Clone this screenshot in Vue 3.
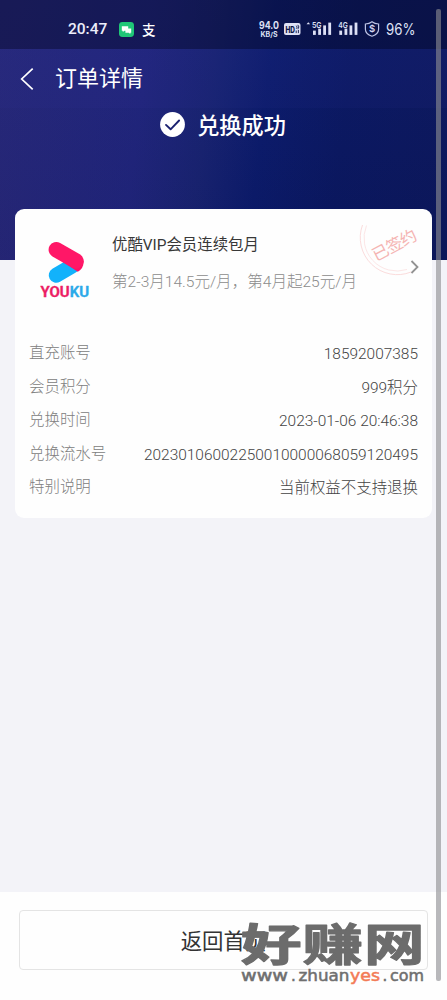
<template>
    <div class="page">
        <header class="hero">
            <div class="status">
                <div class="status-left">
                    <span class="clock">20:47</span>
                    <svg class="chat" width="15" height="15" viewBox="0 0 15 15">
                        <rect width="15" height="15" rx="3.4" fill="#1fc777" />
                        <path d="M2.8 4.2h6.4v4.6H5.4L3.8 10V8.8h-1z" fill="#fff" />
                        <path d="M6.4 6.5h5.8v4.2h-.9v1.2l-1.6-1.2H6.4z" fill="#f4fff9" />
                    </svg>
                    <span class="pay">支</span>
                </div>
                <svg class="status-right" width="162" height="22" viewBox="0 0 162 22">
                    <g fill="#dde0f5">
                        <text x="2" y="10.5" font-size="10" font-weight="700" textLength="20" lengthAdjust="spacingAndGlyphs">94.0</text>
                        <text x="3.5" y="18.6" font-size="7" font-weight="700" textLength="17" lengthAdjust="spacingAndGlyphs">KB/S</text>
                        <rect x="27" y="5" width="16.5" height="12" rx="2" />
                        <path d="M49.5 6.2l1.8-2 1.8 2z" />
                        <text x="55" y="9.6" font-size="8" font-weight="600" textLength="9.5" lengthAdjust="spacingAndGlyphs">5G</text>
                        <text x="81.2" y="9.6" font-size="8" font-weight="600" textLength="9.5" lengthAdjust="spacingAndGlyphs">4G</text>
                        <g v-for="x in [56, 82.3]" :key="x">
                            <rect :x="x" y="12.6" width="2.8" height="4.3" />
                            <rect :x="x + 5.2" y="10.6" width="2.8" height="6.3" />
                            <rect :x="x + 10.2" y="7.4" width="2.8" height="9.5" />
                            <rect :x="x + 15.3" y="4.6" width="2.8" height="12.3" />
                        </g>
                    </g>
                    <text x="28.5" y="14.5" font-size="9" font-weight="800" fill="#0b1345" textLength="9.5" lengthAdjust="spacingAndGlyphs">HD</text>
                    <path d="M39.3 7.7q1.7 1.4 0 3M40.8 6.9q2.2 2 0 4.2M39.2 12.5v2.6M41.4 11.900v3.200" fill="none" stroke="#0b1345" stroke-width=".9" />
                    <path d="M115 3.700c2 1.500 4 2.100 6.600 2.300v5.200c0 3.400-2.400 5.600-6.600 7-4.200-1.400-6.600-3.600-6.600-7V6c2.600-.2 4.600-.8 6.600-2.300z" fill="none" stroke="#bdc4e6" stroke-width="1.2" />
                    <text x="115" y="14.300" font-size="9.5" font-weight="600" text-anchor="middle" fill="#d5d9f2">$</text>
                    <text x="129" y="16.500" font-size="15.500" font-weight="400" fill="#dde0f5" textLength="29.500" lengthAdjust="spacingAndGlyphs">96%</text>
                </svg>
            </div>
            <nav class="nav">
                <svg width="14" height="24" viewBox="0 0 14 24">
                    <path d="M12.7 1.7L1.7 12l11 10.3" fill="none" stroke="#fff" stroke-width="1.7" />
                </svg>
                <h1>订单详情</h1>
            </nav>
            <div class="result">
                <svg width="25" height="25" viewBox="0 0 25 25">
                    <circle cx="12.5" cy="12.5" r="12.4" fill="#fff" />
                    <path d="M6 12.9l4.6 4.4 8.5-8.8" fill="none" stroke="#1b2170" stroke-width="1.9" stroke-linecap="round" stroke-linejoin="round" />
                </svg>
                <span>兑换成功</span>
            </div>
        </header>

        <main class="card">
            <section class="product">
                <svg class="logo" width="52" height="60" viewBox="0 0 52 60">
                    <path d="M17.2 36.3L33 27" stroke="#12b2fb" stroke-width="15" stroke-linecap="round" />
                    <path d="M18 19L38.8 32.7Q44.8 29.5 44.6 22L34 14z" fill="#ff0f65" />
                    <path d="M17.3 10.7L37 22" stroke="#ff1767" stroke-width="15.4" stroke-linecap="round" />
                    <text x="1.5" y="57.8" font-size="13.8" font-weight="600" stroke-width=".4" stroke-linejoin="round" textLength="48.5" lengthAdjust="spacingAndGlyphs"><tspan fill="#ec1b63" stroke="#ec1b63">YOU</tspan><tspan fill="#2ba9e9" stroke="#2ba9e9">KU</tspan></text>
                </svg>
                <div class="info">
                    <h2>优酷VIP会员连续包月</h2>
                    <p>第2-3月14.5元/月，第4月起25元/月</p>
                </div>
                <svg class="stamp" width="68" height="60" viewBox="0 0 68 60">
                    <path d="M10.5 4A37 37 0 0 0 59 51" fill="none" stroke="#fbdcdc" stroke-width="1" />
                    <path d="M14.5 4.5A33 33 0 0 0 55 48.5" fill="none" stroke="#fce6e6" stroke-width="1" />
                    <text transform="translate(24 40.5) rotate(-28)" font-size="16.5" textLength="48" fill="#f5b5b3">已签约</text>
                </svg>
                <svg class="arrow" width="10" height="14" viewBox="0 0 10 14">
                    <path d="M1.5 1l6 6-6 6" fill="none" stroke="#929292" stroke-width="1.8" />
                </svg>
            </section>
            <dl class="details">
                <div v-for="row in rows" :key="row.label" class="row">
                    <dt>{{ row.label }}</dt>
                    <dd>{{ row.value }}</dd>
                </div>
            </dl>
        </main>

        <footer class="footer">
            <button class="home">返回首页</button>
        </footer>

        <svg class="watermark" width="190" height="70" viewBox="0 0 190 70">
            <text class="brand" transform="translate(2 43.5) scale(1.36 1)" textLength="135">好赚网</text>
            <g class="site">
                <text x="2" y="64" textLength="47" lengthAdjust="spacingAndGlyphs">www</text>
                <text x="52" y="64">.</text>
                <text x="59.5" y="64" textLength="51" lengthAdjust="spacingAndGlyphs">zhuan</text>
                <text x="111" y="64" class="accent" textLength="30" lengthAdjust="spacingAndGlyphs">yes</text>
                <text x="143.5" y="64">.</text>
                <text x="151" y="64" textLength="34" lengthAdjust="spacingAndGlyphs">com</text>
            </g>
        </svg>
        <div class="scrollbar"></div>
    </div>
</template>

<script setup>
import { ref } from 'vue';

const rows = ref([
    { label: '直充账号', value: '18592007385' },
    { label: '会员积分', value: '999积分' },
    { label: '兑换时间', value: '2023-01-06 20:46:38' },
    { label: '兑换流水号', value: '20230106002250010000068059120495' },
    { label: '特别说明', value: '当前权益不支持退换' }
]);
</script>

<style>
body {
    margin: 0;
    background: #f3f3f8;
}
</style>

<style scoped>
.page {
    position: relative;
    display: flex;
    flex-direction: column;
    width: 447px;
    height: 1000px;
    overflow: hidden;
    background: #f3f3f8;
    font-family: Roboto, "Noto Sans CJK SC", sans-serif;
}

.page svg {
    display: block;
    flex: none;
}

h1,
h2,
p,
dl,
dd {
    margin: 0;
}

.hero {
    box-sizing: border-box;
    flex: none;
    height: 260px;
    background:
        linear-gradient(180deg, rgba(38, 58, 160, .1), rgba(0, 0, 20, .04)),
        linear-gradient(97deg, #272777 0%, #20247a 32%, #18226f 46%, #0b1a69 58%, #0a175f 75%, #0c175b 100%);
    color: #fff;
}

.status {
    display: flex;
    justify-content: space-between;
    box-sizing: border-box;
    height: 49px;
    padding: 18px 28px 0 68px;
    background: rgba(4, 8, 35, .42);
    font-family: Inter, Roboto, sans-serif;
}

.status-left {
    display: flex;
    height: 22px;
    align-items: center;
}

.clock {
    width: 51px;
    font: 500 15.5px/22px Roboto, sans-serif;
    color: #eceefa;
}

.pay {
    margin-left: 8px;
    font: 500 13.5px/20px "Noto Sans CJK SC", sans-serif;
}

.nav {
    display: flex;
    align-items: center;
    height: 59px;
    padding-left: 20px;
    gap: 21px;
    background: rgba(70, 70, 190, .06);
}

.nav h1 {
    padding-top: 1px;
    font-size: 22px;
    font-weight: 400;
    line-height: 30px;
}

.result {
    display: flex;
    align-items: center;
    justify-content: center;
    gap: 12px;
    height: 33px;
    margin-right: 1px;
    font-size: 22.2px;
    font-weight: 500;
}

.result span {
    margin-top: -1px;
}

.card {
    flex: none;
    box-sizing: border-box;
    width: 417px;
    height: 309px;
    margin: -51px 0 0 15px;
    padding: 0 14px;
    border-radius: 9px;
    background: #fefefe;
}

.product {
    position: relative;
    display: flex;
    height: 127px;
}

.logo {
    margin: 30px 0 0 10px;
}

.info {
    margin: 24px 0 0 21px;
    white-space: nowrap;
}

.info h2 {
    font-size: 15.4px;
    font-weight: 400;
    line-height: 24px;
    color: #383838;
}

.info p {
    margin-top: 14px;
    font-size: 15.55px;
    font-weight: 300;
    line-height: 22px;
    color: #8c8c8c;
}

.stamp {
    position: absolute;
    right: -2px;
    top: 12px;
}

.arrow {
    position: absolute;
    right: -2px;
    top: 51px;
}

.row {
    display: flex;
    justify-content: space-between;
    height: 33.6px;
    font-size: 15.45px;
    font-weight: 300;
    line-height: 34px;
    white-space: nowrap;
}

.row dt {
    color: #808080;
}

.row dd {
    padding-top: 1px;
    color: #444;
}

.footer {
    box-sizing: border-box;
    height: 108px;
    margin-top: auto;
    padding: 18px 19px 0;
    background: #fefefe;
}

.home {
    display: block;
    width: 409px;
    height: 60px;
    padding: 0;
    border: 1px solid #e4e4e4;
    border-radius: 4px;
    background: #fefefe;
    color: #333;
    font: 400 21.4px/58px "Noto Sans CJK SC", sans-serif;
}

.watermark {
    position: absolute;
    left: 239px;
    top: 917px;
}

.brand {
    font-size: 44.5px;
    font-weight: 700;
    fill: #6c6c6c;
    stroke: #6c6c6c;
    stroke-width: 1.2px;
    stroke-linejoin: round;
}

.site {
    font-family: "DejaVu Sans", sans-serif;
    font-size: 15px;
    fill: #6f6f6f;
    stroke: #6f6f6f;
    stroke-width: .5px;
}

.accent {
    fill: #f37a55;
    stroke: #f37a55;
}

.scrollbar {
    position: absolute;
    left: 436px;
    top: 9px;
    width: 4.5px;
    height: 972px;
    border-radius: 2px;
    background: rgba(140, 140, 145, .62);
}
</style>
